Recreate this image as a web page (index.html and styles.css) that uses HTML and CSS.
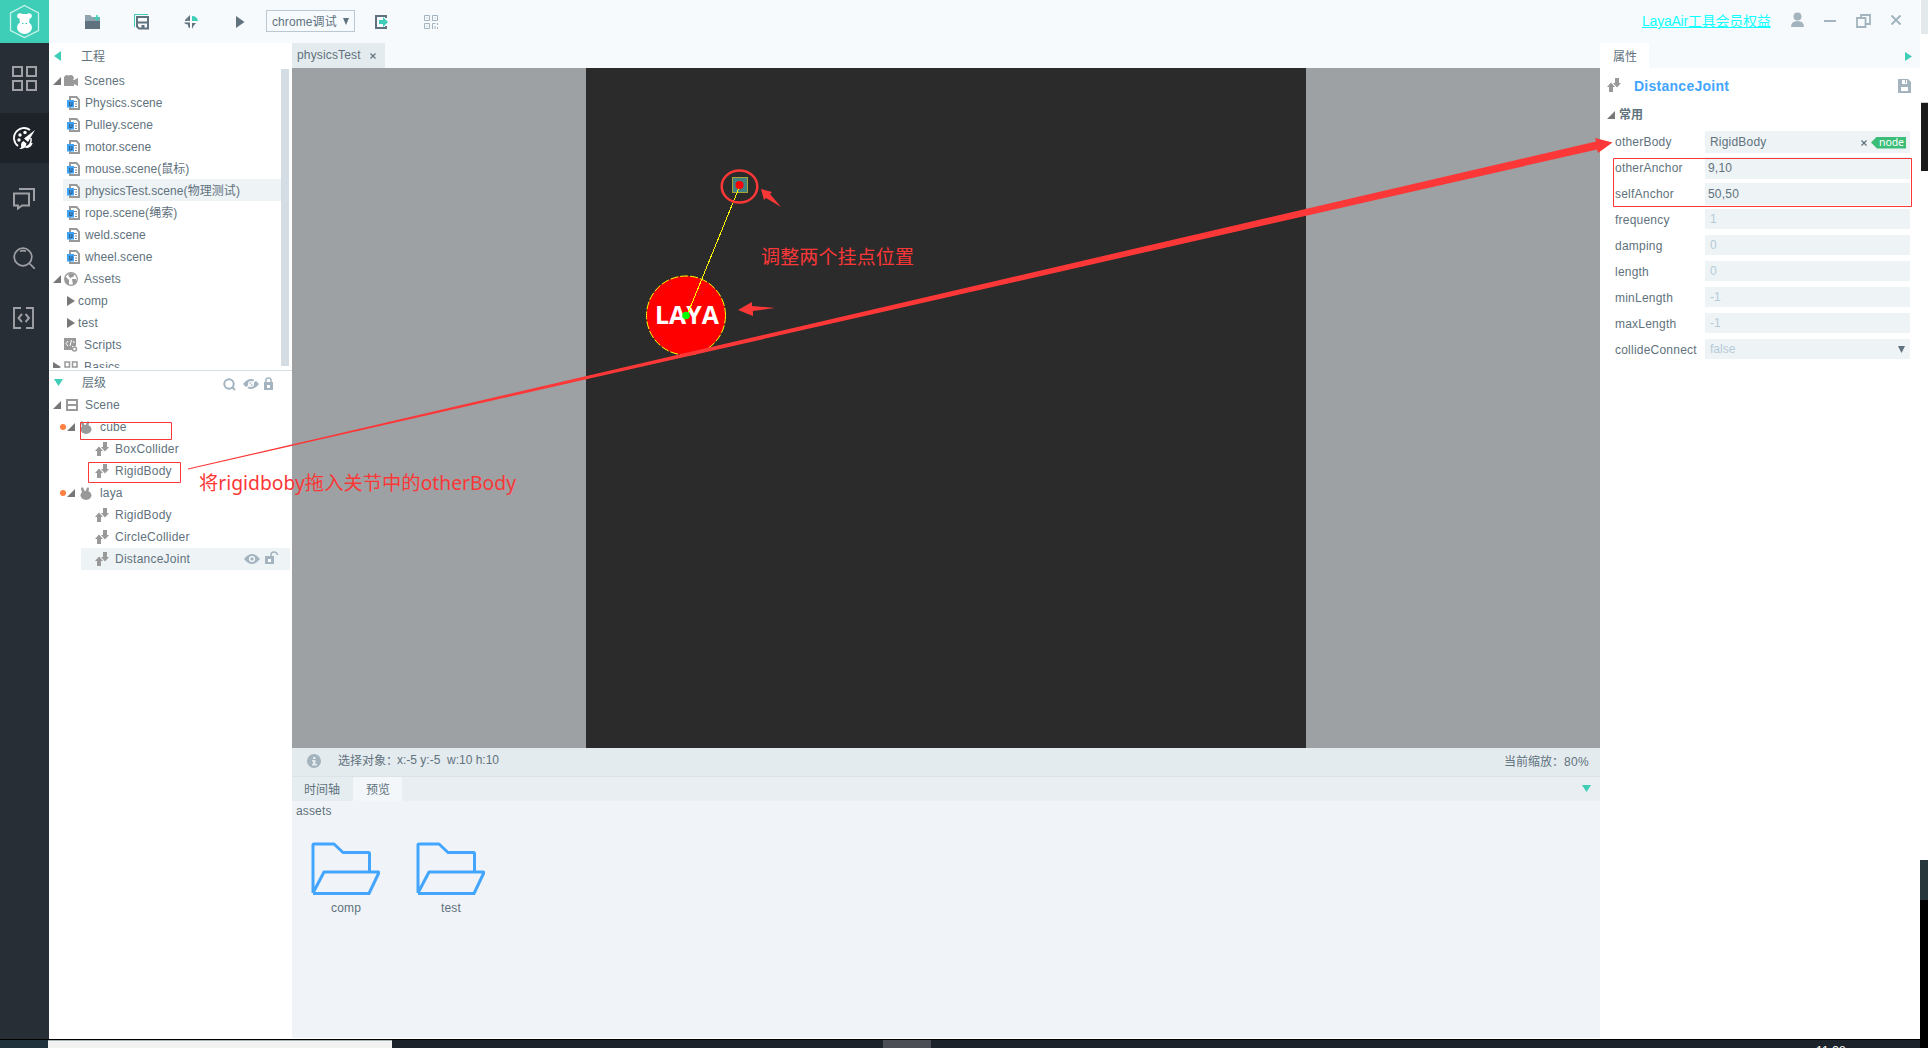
FILE: index.html
```
<!DOCTYPE html>
<html lang="zh-CN">
<head>
<meta charset="utf-8">
<title>LayaAir</title>
<link rel="stylesheet" href="styles.css">
</head>
<body>
<svg class="defs" width="0" height="0">
  <symbol id="scene" viewBox="0 0 13 14"><path d="M3 1h6.500L12 3.800V13H3z" fill="#fff" stroke="#999" stroke-width="2"/><path d="M7 5h3v1H7zM8 7.500h2v1H8zM8 10h2v1H8z" fill="#888"/><path d="M0 4h7v7.500H0z" fill="#3ea4fb"/><path d="M2.700 6v3.700h2.300V6" fill="none" stroke="#345570" stroke-width="1"/></symbol>
  <symbol id="joint" viewBox="0 0 14 14"><path d="M0 9l4-4.500L8 9H6v5H2V9zM6 5h2V0h4v5h2l-4 4.500z" fill="#999"/></symbol>
  <symbol id="open" viewBox="0 0 8 8"><path d="M8 0v8H0z" fill="#777"/></symbol>
  <symbol id="shut" viewBox="0 0 8 10"><path d="M0 0l8 5-8 5z" fill="#777"/></symbol>
  <symbol id="bunny" viewBox="0 0 12 13"><ellipse cx="6" cy="8.300" rx="5.500" ry="4.600" fill="#999"/><ellipse cx="2.700" cy="3" rx="1.400" ry="3" transform="rotate(-15 3 3)" fill="#999"/><ellipse cx="7.500" cy="3" rx="1.300" ry="3" transform="rotate(12 7 3)" fill="#999"/></symbol>
  <symbol id="eye" viewBox="0 0 16 10"><path d="M0 5q8-10 16 0q-8 10-16 0z" fill="#a3b4c0"/><circle cx="8" cy="5" r="3" fill="#fff"/><circle cx="8" cy="5" r="1.800" fill="#a3b4c0"/></symbol>
  <symbol id="folder" viewBox="0 0 69 53"><path d="M2 51V2.500Q2 2 3 2H23L32 10.500H57.500Q58.500 10.500 58.500 11.500V29M2 51L13 30H67.500Q68 30.500 67.500 31.500L58 51.500H2" fill="none" stroke="#43a5fd" stroke-width="3" stroke-linejoin="round"/></symbol>
</svg>
<div class="screen">
  <div class="app">
    <nav class="rail">
      <div class="logo"><svg width="49" height="43"><path d="M24.500 5.500L38.500 13v17.500L24.500 37.500 10.500 30.500V13z" fill="none" stroke="#c9f3eb" stroke-width="1.300"/><g fill="#fff"><circle cx="20" cy="16" r="2.800"/><circle cx="29" cy="16" r="2.800"/><path d="M20 14h9v10h-9z"/><ellipse cx="24.500" cy="27.500" rx="7.500" ry="6.500"/><circle cx="24.500" cy="20" r="5"/></g><path d="M22 23.500h1.500M25.500 23.500H27" stroke="#3eceb8"/></svg></div>
      <div class="tool first"><svg width="26" height="26" fill="none" stroke="#9ea0a5" stroke-width="2"><path d="M1 1h9v9H1zM15 1h9v9h-9zM1 15h9v9H1zM15 15h9v9h-9z"/></svg></div>
      <div class="tool active"><svg width="22" height="22" viewBox="0 0 22 22"><path d="M17 3A9.500 9.500 0 1 0 5 19" fill="none" stroke="#fff" stroke-width="1.800"/><path d="M18 11q1 7-5 9q4 1 6-4" fill="none" stroke="#fff" stroke-width="1.500"/><g fill="#fff"><circle cx="7" cy="8" r="1.700"/><circle cx="12" cy="5.500" r="1.700"/><circle cx="6" cy="13" r="1.700"/><path d="M22 3l-7 12-4-3.500zM10.500 14l3 2.500q-1 6-7.500 5.500 3-1 2-4 0-3 2.500-4z"/></g></svg></div>
      <div class="tool"><svg width="22" height="23" fill="none" stroke="#9ea0a5" stroke-width="2"><path d="M1 6.500h15v12H9l-4 3v-3H1zM6 2h15v12"/></svg></div>
      <div class="tool"><svg width="22" height="22" fill="none" stroke="#9ea0a5" stroke-width="1.700"><circle cx="10" cy="10" r="8.800"/><path d="M16 16l6 6M7 4.200q3-1 6 0"/></svg></div>
      <div class="tool"><svg width="22" height="22" fill="none" stroke="#9ea0a5" stroke-width="1.900"><path d="M8 1H1v20h7M13 1h7v20h-7M9 7l-3.500 4L9 15M12.500 7l3.500 4-3.500 4"/></svg></div>
    </nav>
    <div class="work">
      <header class="topbar">
        <svg class="t1" width="16" height="14"><path d="M0 0h5l2 2h8v4H0z" fill="#8fa3ae"/><path d="M0 6h15v8H0z" fill="#5f727d"/><path d="M9 3h6M12 0v6" stroke="#3eceb8" stroke-width="1.500"/></svg>
        <svg class="t2" width="16" height="16"><path d="M.5 13V.5H14" fill="none" stroke="#3eceb8"/><path d="M3 3h11v11.500H5L3 12.500zM3 8.500h11" fill="none" stroke="#5f727d" stroke-width="2"/><path d="M7.500 11h3v4h-3z" fill="#5f727d"/></svg>
        <svg class="t3" width="15" height="15"><path d="M8 1q5 0 6 5H8z" fill="#3eceb8"/><path d="M6 0v6H4.500L3 3zM0 7.500h6V13Q4 13 4 9.500 1 9.500 0 7.500zM8 8h4L9.500 11 8 14zM1 6q0-2 2-3l1 3z" fill="#5f727d"/></svg>
        <svg class="t4" width="9" height="12"><path d="M0 0l8.500 6L0 12z" fill="#5f727d"/></svg>
        <div class="combo"><span>chrome调试</span><svg width="6" height="7"><path d="M0 0h6L3 7z" fill="#5f727d"/></svg></div>
        <svg class="t5" width="14" height="14"><path d="M11 3V1H1v12h10v-2" fill="none" stroke="#5f727d" stroke-width="2"/><path d="M4 5h4V2l5 5-5 5V9H4z" fill="#3eceb8"/></svg>
        <svg class="t6" width="15" height="15" fill="none" stroke="#a3b4be"><path d="M.5.500h5v5h-5zM8.500.500h5v5h-5zM.5 8.500h5v5h-5zM2.500 3h1M10.500 3h1M2.500 11h1M8.500 14V8.500h3M11 11v3M13.500 8v2M13.500 12v2"/></svg>
        <a class="member">LayaAir工具会员权益</a>
        <svg class="t7" width="13" height="16" fill="#a3b4be"><circle cx="6.500" cy="4.500" r="4"/><path d="M0 15q0-6 6.500-6t6.500 6z"/></svg>
        <svg class="t8" width="12" height="14"><path d="M0 9h12" stroke="#a3b4be" stroke-width="2"/></svg>
        <svg class="t9" width="16" height="14" fill="none" stroke="#a3b4be" stroke-width="1.800"><path d="M1 4h8.500v9H1zM5 4V1h9v9h-4"/></svg>
        <svg class="t10" width="10" height="10"><path d="M.5.500l9 9M9.500.500l-9 9" stroke="#a3b4be" stroke-width="2"/></svg>
      </header>
      <div class="cols">
        <aside class="left">
          <section class="project">
            <div class="phead"><svg width="7" height="10"><path d="M7 0v10L0 5z" fill="#3eceb8"/></svg><span>工程</span></div>
            <div class="scroll">
              <div class="tree">
                <div class="row root"><svg class="tri"><use href="#open"/></svg><svg class="ico" width="14" height="12"><path d="M0 2q2-3 4.500-1.500Q9-1 10 3l-1 2h1l4-2v8l-4-2v2H0z" fill="#999"/></svg>Scenes</div>
                <div class="row leaf"><svg class="file"><use href="#scene"/></svg>Physics.scene</div>
                <div class="row leaf"><svg class="file"><use href="#scene"/></svg>Pulley.scene</div>
                <div class="row leaf"><svg class="file"><use href="#scene"/></svg>motor.scene</div>
                <div class="row leaf"><svg class="file"><use href="#scene"/></svg>mouse.scene(鼠标)</div>
                <div class="row leaf on"><svg class="file"><use href="#scene"/></svg>physicsTest.scene(物理测试)</div>
                <div class="row leaf"><svg class="file"><use href="#scene"/></svg>rope.scene(绳索)</div>
                <div class="row leaf"><svg class="file"><use href="#scene"/></svg>weld.scene</div>
                <div class="row leaf"><svg class="file"><use href="#scene"/></svg>wheel.scene</div>
                <div class="row root"><svg class="tri"><use href="#open"/></svg><svg class="ico" width="14" height="14"><circle cx="7" cy="7" r="6.300" fill="#fff" stroke="#999" stroke-width="1.300"/><path d="M1 4l4 4v5Q0 11 1 4zM6 1l5 1-2 3-3 1-2-3zM8 7l4 0 0 3-3 3z" fill="#999"/></svg>Assets</div>
                <div class="row sub"><svg class="arr"><use href="#shut"/></svg>comp</div>
                <div class="row sub"><svg class="arr"><use href="#shut"/></svg>test</div>
                <div class="row root"><span class="tri"></span><svg class="ico" width="14" height="14"><path d="M0 0h12v8H8v4H0z" fill="#999"/><path d="M4 3L2 5.500 4 8M6 8l1.500-6M9 3l1.500 2" fill="none" stroke="#fff"/><circle cx="10.500" cy="11" r="2" fill="#fff" stroke="#999" stroke-width="1.500"/></svg>Scripts</div>
                <div class="row root last"><svg class="arr"><use href="#shut"/></svg><svg class="ico" width="14" height="12" fill="none" stroke="#999" stroke-width="1.500"><path d="M1 1h4.500v5H1zM8.500 1H13v5H8.500zM0 9h6M8 9h6M10 9v3"/></svg>Basics</div>
              </div>
              <div class="bar"></div>
            </div>
          </section>
          <section class="hier">
            <div class="phead h2"><svg width="9" height="7"><path d="M0 0h9L4.500 7z" fill="#3eceb8"/></svg><span>层级</span>
              <svg class="hs" width="13" height="13" fill="none" stroke="#a3b4c0" stroke-width="2"><circle cx="6" cy="6" r="4.700"/><path d="M9 9l3 3"/></svg>
              <svg class="he" width="16" height="12"><use href="#eye" y="1" width="16" height="10"/><path d="M2 11L14 1" stroke="#fff" stroke-width="1.500"/></svg>
              <svg class="hl" width="9" height="13"><path d="M2 6V3q0-2 2.500-2T7 3v3" fill="none" stroke="#a3b4c0" stroke-width="1.500"/><path d="M0 5h9v8H0z" fill="#a3b4c0"/><path d="M3 8h3v3H3z" fill="#fff"/></svg>
            </div>
            <div class="row root scene"><svg class="tri"><use href="#open"/></svg><svg class="page" width="12" height="12"><path d="M1 1h10v10H1zM1 6h10" fill="none" stroke="#999" stroke-width="2"/></svg>Scene</div>
            <div class="row obj"><i></i><svg class="tri"><use href="#open"/></svg><svg class="bun"><use href="#bunny"/></svg>cube</div>
            <div class="row cmp"><svg class="jt"><use href="#joint"/></svg>BoxCollider</div>
            <div class="row cmp"><svg class="jt"><use href="#joint"/></svg>RigidBody</div>
            <div class="row obj"><i></i><svg class="tri"><use href="#open"/></svg><svg class="bun"><use href="#bunny"/></svg>laya</div>
            <div class="row cmp"><svg class="jt"><use href="#joint"/></svg>RigidBody</div>
            <div class="row cmp"><svg class="jt"><use href="#joint"/></svg>CircleCollider</div>
            <div class="row cmp on"><svg class="jt"><use href="#joint"/></svg><span>DistanceJoint</span><svg class="ve" width="16" height="10"><use href="#eye"/></svg><svg class="vl" width="14" height="14"><path d="M6 6V4q0-3 3-3t3.500 3" fill="none" stroke="#a3b4c0" stroke-width="1.500"/><path d="M0 5h9v8H0z" fill="#a3b4c0"/><path d="M3 8h3v3H3z" fill="#fff"/></svg></div>
          </section>
        </aside>
        <main class="center">
          <div class="tabs"><div class="tab">physicsTest<svg width="6" height="6"><path d="M.5.500l5 5M5.500.500l-5 5" stroke="#5f727d" stroke-width="1.200"/></svg></div></div>
          <div class="stage"><div class="canvas"></div></div>
          <div class="status"><svg width="14" height="14"><circle cx="7" cy="7" r="7" fill="#a3b4be"/><path d="M6 3h2.500v2H6zM5 6h3.500v4H10v1.500H5V10h1V7.500H5z" fill="#e4ebee"/></svg><span class="sel">选择对象：</span><span class="pos">x:-5 y:-5&nbsp; w:10 h:10</span><span class="zoom">当前缩放：</span><span class="pct">80%</span></div>
          <div class="btabs"><div class="bt">时间轴</div><div class="bt cur">预览</div><svg width="9" height="7"><path d="M0 0h9L4.500 7z" fill="#3eceb8"/></svg></div>
          <div class="preview">
            <div class="crumb">assets</div>
            <div class="files">
              <figure><svg width="69" height="53"><use href="#folder"/></svg><figcaption>comp</figcaption></figure>
              <figure><svg width="69" height="53"><use href="#folder"/></svg><figcaption>test</figcaption></figure>
            </div>
          </div>
        </main>
        <aside class="props">
          <div class="ptabs"><div class="ptab">属性</div><svg width="7" height="9"><path d="M0 0l7 4.500L0 9z" fill="#3eceb8"/></svg></div>
          <div class="title"><svg class="jt"><use href="#joint"/></svg><b>DistanceJoint</b><svg width="13" height="14"><path d="M0 0h10l3 3v11H0z" fill="#a3b4be"/><path d="M4 1h5v4H4zM3 8h7v4H3z" fill="#fff"/><path d="M7 1h1v3H7z" fill="#a3b4be"/></svg></div>
          <div class="group"><svg class="tri"><use href="#open"/></svg>常用</div>
          <div class="fields">
            <label>otherBody</label><div class="val tall ref">RigidBody<svg width="6" height="6"><path d="M.5.500l5 5M5.500.500l-5 5" stroke="#5f727d" stroke-width="1.200"/></svg><em>node</em></div>
            <label>otherAnchor</label><div class="val tall">9,10</div>
            <label>selfAnchor</label><div class="val tall">50,50</div>
            <label>frequency</label><div class="val dim">1</div>
            <label>damping</label><div class="val dim">0</div>
            <label>length</label><div class="val dim">0</div>
            <label>minLength</label><div class="val dim">-1</div>
            <label>maxLength</label><div class="val dim">-1</div>
            <label>collideConnect</label><div class="val dim drop">false<svg width="7" height="7"><path d="M0 0h7L3.500 7z" fill="#5f727d"/></svg></div>
          </div>
        </aside>
      </div>
    </div>
    <div class="edge"><div class="e1"></div><div class="e2"></div><div class="e3"></div><div class="e4"></div><div class="e5"></div></div>
  </div>
  <footer class="taskbar"><div class="start"></div><div class="search"></div><div class="slot"></div><div class="clock">11:38</div><div class="desk"></div></footer>
  <svg class="notes" width="1928" height="1048" viewBox="0 0 1928 1048">
    <rect x="732.500" y="177.500" width="15" height="15" fill="#408080" stroke="#a9a238"/>
    <circle cx="686" cy="315.500" r="39.500" fill="#f00" stroke="#ff0" stroke-dasharray="8 2"/>
    <text class="ball" x="655" y="324" textLength="64" lengthAdjust="spacingAndGlyphs">LAYA</text>
    <path d="M739 188L688 313" stroke="#ff0" shape-rendering="crispEdges"/>
    <circle cx="686" cy="315.500" r="3.800" fill="#0f0"/>
    <circle cx="739.500" cy="185" r="4" fill="#f00"/>
    <g fill="none" stroke="#fb3737"><ellipse cx="739.500" cy="186.500" rx="17.800" ry="16" stroke-width="2.500"/><path d="M80.500 422.500h91v17h-91zM88.500 462.500h92v20h-92zM1613.500 158.500h298v48h-298z"/></g>
    <g fill="#fb3737"><path d="M761 189l11 3-2 2 11 13-15-9-2 2zM738 310l14-8v4l23 2-22 3v5zM188 468.500L920 298.500 1596 141.500 1595 138 1612.500 142.500 1598 153 1597 149.500 920 303.500 188 469.500z"/></g>
    <text class="note" x="761" y="264" textLength="153">调整两个挂点位置</text>
    <text class="note" x="199" y="490" textLength="317" lengthAdjust="spacingAndGlyphs">将rigidboby拖入关节中的otherBody</text>
  </svg>
</div>
</body>
</html>
```
FILE: styles.css
```
* { box-sizing: border-box; }
body { margin: 0; overflow: hidden; color: #5f727d; font: 12px/22px "Liberation Sans", "Noto Sans CJK SC", sans-serif; letter-spacing: .15px; }
svg { display: block; flex: none; }
.defs { position: absolute; }
.screen { position: relative; width: 1928px; height: 1048px; display: flex; flex-direction: column; background: #fff; }
.app { display: flex; height: 1039px; }
.rail { width: 49px; background: #282e36; }
.logo { height: 43px; background: #3eceb8; }
.tool { height: 50px; margin-bottom: 10px; display: flex; align-items: center; padding-left: 13px; }
.first { margin-top: 10px; padding: 2px 0 0 12px; }
.active { background: #1e2229; }
.work { width: 1871px; display: flex; flex-direction: column; }
.topbar { height: 43px; background: #f6fafd; display: flex; align-items: flex-start; }
.t1 { margin: 15px 0 0 36px; }
.t2 { margin: 14px 0 0 33px; }
.t3 { margin: 15px 0 0 34px; }
.t4 { margin: 16px 0 0 37px; }
.combo { width: 89px; height: 22px; margin: 10px 0 0 21px; border: 1px solid #b9c8d2; display: flex; align-items: center; gap: 7px; padding-left: 5px; letter-spacing: 0; white-space: nowrap; }
.combo span { width: 64px; line-height: 20px; padding-top: 1px; letter-spacing: .1px; }
.t5 { margin: 15px 0 0 20px; }
.t6 { margin: 15px 0 0 35px; }
.member { margin: 10px 0 0 1203px; width: 129px; color: #1ff; font-size: 14px; letter-spacing: -.22px; text-decoration: underline; white-space: nowrap; }
.t7 { margin: 12px 0 0 20px; }
.t8 { margin: 12px 0 0 20px; }
.t9 { margin: 14px 0 0 20px; }
.t10 { margin: 15px 0 0 19px; }
.cols { display: flex; flex: 1; }
.left { width: 243px; background: #fff; }
.project { height: 328px; border-bottom: 1px solid #d5dfe6; }
.phead { height: 26px; display: flex; align-items: center; padding: 2px 0 0 5px; gap: 20px; letter-spacing: 0; }
.phead svg { margin-top: -2px; }
.phead span { line-height: 24px; }
.h2 { height: 23px; gap: 19px; padding-top: 1px; }
.h2 .hs { margin: 2px 0 0 98px; }
.h2 .he { margin: 2px 0 0 -12px; }
.h2 .hl { margin: 0 0 0 -14px; }
.scroll { display: flex; height: 299px; overflow: hidden; }
.tree { width: 232px; }
.bar { width: 8px; height: 297px; background: #d4dce4; }
.row { height: 22px; display: flex; align-items: center; white-space: nowrap; }
.tree .row { padding-top: 2px; }
.tri { width: 8px; height: 8px; }
.root { padding-left: 4px; }
.root .tri { margin-right: 3px; }
.root .arr { margin-right: 3px; }
.ico { margin-right: 6px; }
.page { margin: 0 7px 0 2px; }
.leaf { margin-left: 14px; padding-left: 4px; letter-spacing: .07px; }
.file { width: 13px; height: 14px; margin-right: 5px; }
.arr { width: 8px; height: 10px; }
.sub { padding-left: 18px; gap: 3px; }
.on { background: #eef3f6; }
.obj { padding-left: 11px; }
.obj i { width: 6px; height: 6px; margin-right: 1px; border-radius: 50%; background: #ff8040; }
.bun { width: 12px; height: 13px; margin: 0 8px 0 5px; }
.cmp { margin: 0 2px 0 32px; padding-left: 14px; letter-spacing: .24px; }
.jt { width: 14px; height: 14px; margin-right: 6px; }
.ve { margin-left: auto; }
.vl { margin: -2px 11px 0 5px; }
.center { width: 1308px; display: flex; flex-direction: column; }
.tabs { height: 25px; background: #f6fafd; }
.tab { width: 93px; height: 25px; background: #e4ebee; display: flex; align-items: center; gap: 9px; padding: 0 0 1px 5px; white-space: nowrap; }
.tab svg { margin-top: 1px; }
.stage { height: 680px; background: #9da1a4; display: flex; justify-content: center; }
.canvas { width: 720px; background: #2b2b2b; }
.status { height: 29px; background: #e4ebee; border-bottom: 1px solid #d9e3e8; display: flex; align-items: center; padding: 0 11px 3px 15px; white-space: nowrap; }
.sel { margin-left: 17px; width: 59px; letter-spacing: 0; }
.pos { letter-spacing: 0; margin-top: -1px; }
.zoom { margin-left: auto; width: 60px; letter-spacing: 0; padding-top: 2px; }
.pct { padding-top: 2px; letter-spacing: .3px; }
.btabs { height: 24px; background: #e9eef2; display: flex; align-items: center; letter-spacing: 0; }
.btabs svg { margin: -1px 9px 0 auto; }
.bt { width: 61px; padding: 3px 0 0 12px; line-height: 21px; background: #e6edf0; }
.cur { width: 49px; padding-left: 13px; background: #f3f7fa; }
.preview { height: 237px; background: #f0f4f8; }
.crumb { padding-left: 4px; line-height: 21px; }
.files { display: flex; gap: 36px; padding: 20px 0 0 19px; }
figure { margin: 0; width: 69px; text-align: center; }
figcaption { margin: 2px 0 0 1px; }
.props { width: 320px; background: #fff; }
.ptabs { height: 25px; background: #f6fafd; display: flex; align-items: center; }
.ptabs svg { margin: 2px 8px 0 auto; }
.ptab { width: 49px; height: 25px; background: #fff; padding: 4px 0 0 13px; line-height: 21px; letter-spacing: 0; }
.title { height: 36px; display: flex; align-items: center; padding: 0 9px 0 7px; }
.title .jt { margin-right: 13px; margin-top: -2px; }
.title b { flex: 1; color: #43a5fd; font-size: 14px; letter-spacing: .26px; }
.group { height: 22px; display: flex; align-items: center; gap: 4px; padding-left: 7px; font-weight: bold; letter-spacing: 0; }
.fields { display: grid; grid-template-columns: 90px 205px; grid-auto-rows: 26px; padding: 5px 0 0 15px; letter-spacing: .22px; }
.fields label { line-height: 22px; }
.val { height: 20px; line-height: 21px; padding-left: 5px; background: #eef3f6; letter-spacing: 0; }
.tall { height: 22px; padding-left: 3px; line-height: 23px; letter-spacing: .2px; }
.ref { display: flex; align-items: center; padding: 1px 4px 0 5px; }
.ref svg { margin-left: auto; }
.ref em { width: 35px; height: 12px; margin-left: 4px; padding-left: 8px; background: #3bbd78; color: #fff; font: 10.5px/11px "Noto Sans", sans-serif; letter-spacing: -.1px; clip-path: polygon(0 50%, 6px 0, 100% 0, 100% 100%, 6px 100%); }
.dim { color: #b5cbd8; }
.drop { display: flex; justify-content: space-between; align-items: center; padding-right: 5px; }
.edge { width: 8px; padding-left: 1px; background: #fff; }
.e1 { height: 34px; background: #e4e9ec; }
.e2 { height: 69px; border-bottom: 1px solid #ccc; }
.e3 { height: 68px; background: #1a1a1a; }
.e4 { height: 729px; border-bottom: 40px solid #28373b; }
.e5 { height: 139px; background: #000; }
.e4, .e5 { margin-left: -1px; }
.taskbar { height: 9px; border-top: 1px solid #000; background: #1c232b; display: flex; overflow: hidden; }
.start { width: 48px; background: #20323c; }
.search { width: 344px; background: #f2f2f2; border-top: 1px solid #a9b2b5; }
.slot { width: 48px; margin-left: 491px; background: #4b4e55; }
.clock { width: 50px; margin-left: 885px; padding-top: 5px; color: #fff; font: 12px/12px "Liberation Sans", sans-serif; }
.desk { width: 62px; border-right: 8px solid #000; }
.notes { position: absolute; inset: 0; }
.ball { fill: #fff; font: bold 25px "Open Sans", sans-serif; letter-spacing: 0; }
.note { fill: #fb3737; font: 19px "Noto Sans", "Noto Sans CJK SC", sans-serif; letter-spacing: 0; }
```
